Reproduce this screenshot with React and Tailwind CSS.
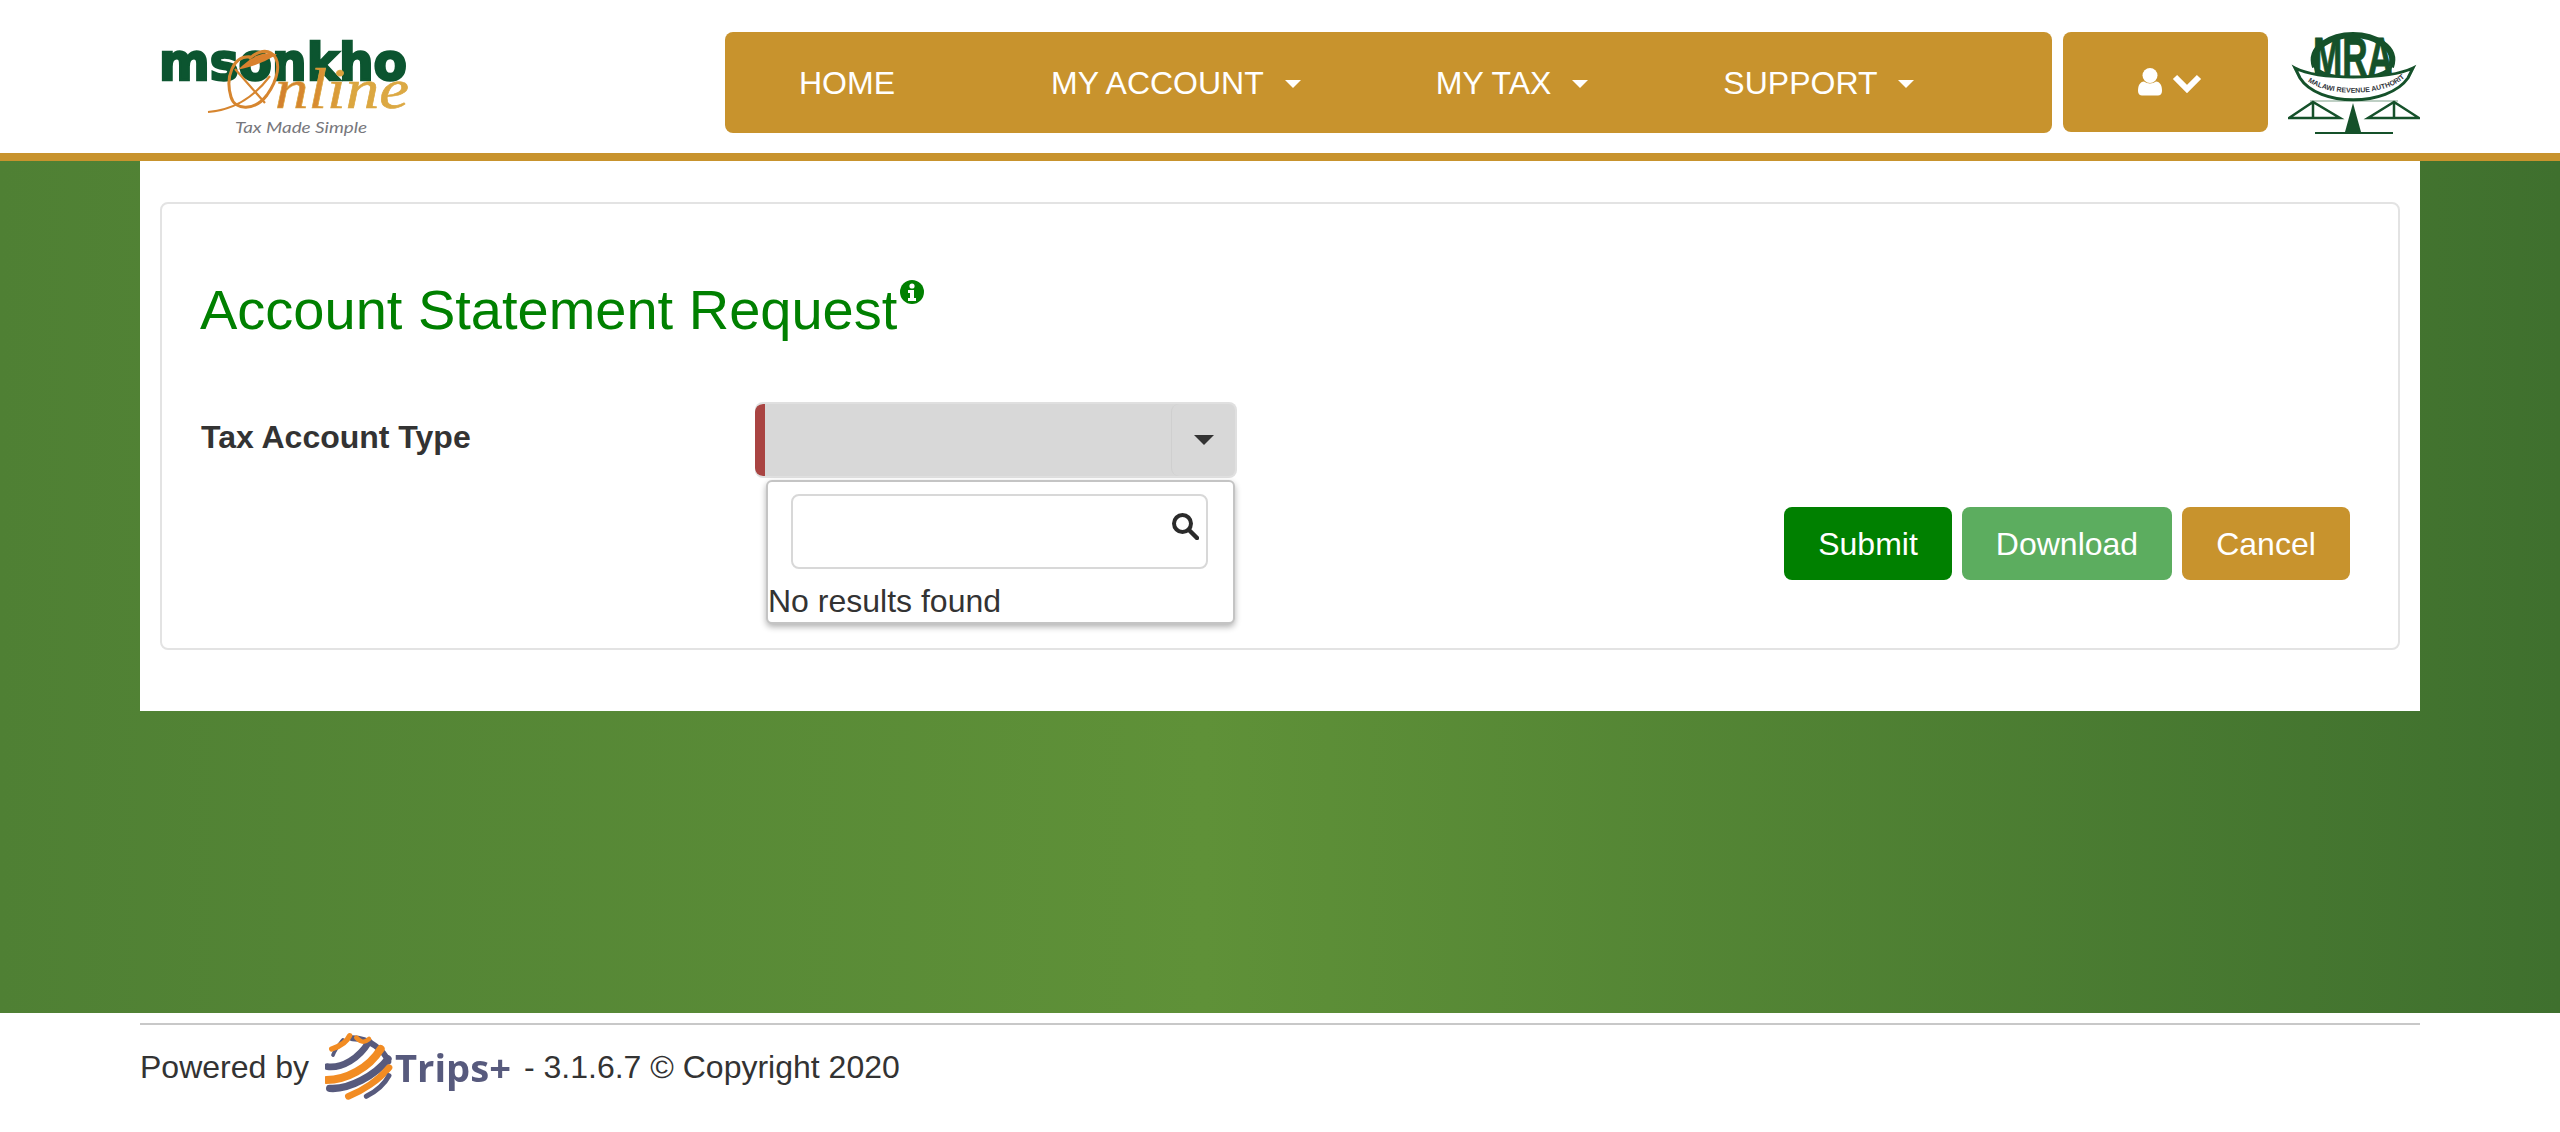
import React from "react";

function MsonkhoLogo() {
  return (
    <svg width="262" height="112" viewBox="0 -12 262 112" className="block">
      <defs>
        <linearGradient id="onlineGrad" x1="0" x2="1" y1="0" y2="0">
          <stop offset="0" stopColor="#d27f2e" />
          <stop offset="0.3" stopColor="#d88b30" />
          <stop offset="0.55" stopColor="#dba63f" />
          <stop offset="1" stopColor="#dcaa45" />
        </linearGradient>
      </defs>
      <text x="0" y="37" fontFamily="'DejaVu Sans', sans-serif" fontWeight="700" fontSize="52" fill="#0c5530" stroke="#0c5530" strokeWidth="2.500" textLength="248" lengthAdjust="spacingAndGlyphs">msonkho</text>
      <path d="M92 14C74 12 66 34 72 54c4 14 24 14 36-2 10-14 16-34 4-42-7-4-16 0-22 6" fill="none" stroke="#d6852f" strokeWidth="3" />
      <path d="M49 69c24-2 44-12 62-36M76 26l30 34" fill="none" stroke="#d6852f" strokeWidth="2.200" />
      <path d="M84 24c8-8 20-14 30-12-8 5-16 9-30 12z" fill="#d9812e" stroke="#d9812e" strokeWidth="3" />
      <text x="116" y="65" fontFamily="'Liberation Serif', serif" fontStyle="italic" fontSize="56" fill="url(#onlineGrad)" stroke="#dba63f" strokeWidth="0.600" textLength="134" lengthAdjust="spacingAndGlyphs">nline</text>
      <text x="76" y="90" fontFamily="Lato, sans-serif" fontStyle="italic" fontSize="16" fill="#77777c" textLength="132" lengthAdjust="spacingAndGlyphs">Tax Made Simple</text>
    </svg>
  );
}

function MraLogo() {
  return (
    <svg width="132" height="122" viewBox="0 -20 132 122" className="block">
      <path d="M27 34C20 14 44 2 65 2s45 12 38 32" fill="none" stroke="#15512a" strokeWidth="6" />
      <path d="M25 30c10 18 70 18 80 0l-3 14c-14 10-60 10-74 0z" fill="#15512a" />
      <text x="65" y="43" textAnchor="middle" fontFamily="'Liberation Sans', sans-serif" fontWeight="700" fontSize="56" fill="#15512a" stroke="#15512a" strokeWidth="1" textLength="80" lengthAdjust="spacingAndGlyphs">MRA</text>
      <path d="M7 35C30 47 100 47 125 35L120 45C100 74 30 74 12 45Z" fill="#fff" stroke="#15512a" strokeWidth="3" />
      <path id="mraArc" d="M15 44C34 65 96 65 117 44" fill="none" />
      <text fontFamily="'Liberation Sans', sans-serif" fontWeight="700" fontSize="7" fill="#30343a"><textPath href="#mraArc" startOffset="6%">MALAWI REVENUE AUTHORITY</textPath></text>
      <path d="M22 68H110" stroke="#15512a" strokeWidth="1" opacity=".55" />
      <path d="M1 85L25 69L52 85Z M80 85L106 69L131 85Z M25 69V85 M106 69V85" fill="none" stroke="#15512a" strokeWidth="2.500" />
      <path d="M65 70L73 99H57Z" fill="#15512a" />
      <path d="M27 100H105" stroke="#15512a" strokeWidth="2" />
    </svg>
  );
}

function TripsLogo() {
  return (
    <svg width="186" height="70" viewBox="0 0 186 70" className="block blur-[0.5px]">
      <g transform="translate(-6 -7) scale(0.3333)" fill="none" strokeLinecap="round">
        <path d="M100 40C150 40 195 75 208 110" stroke="#575a7d" strokeWidth="18" />
        <path d="M25 125C70 130 120 100 150 50" stroke="#575a7d" strokeWidth="20" />
        <path d="M42 90C50 70 60 60 72 45" stroke="#575a7d" strokeWidth="11" />
        <path d="M38 72C70 62 85 48 92 32" stroke="#f28c23" strokeWidth="16" />
        <path d="M112 38C125 52 135 55 150 42" stroke="#f28c23" strokeWidth="14" />
        <path d="M22 165C80 165 150 130 185 72" stroke="#f28c23" strokeWidth="24" />
        <path d="M32 190C90 195 170 150 207 102" stroke="#575a7d" strokeWidth="22" />
        <path d="M88 214C130 198 180 165 210 128" stroke="#f28c23" strokeWidth="20" />
        <path d="M142 214C170 200 195 180 210 152" stroke="#575a7d" strokeWidth="15" />
      </g>
      <text x="70" y="50" fontFamily="'Open Sans', sans-serif" fontWeight="700" fontSize="37" fill="#575a7d" textLength="116" lengthAdjust="spacingAndGlyphs">Trips+</text>
    </svg>
  );
}

function Caret({ className }) {
  return <span className={`inline-block w-0 h-0 border-x-[8px] border-x-transparent border-t-[8px] ${className}`} />;
}

function NavItem({ label, gap }) {
  return (
    <div className={`flex items-center ${gap}`}>
      <span>{label}</span>
      <Caret className="ml-[21px] mt-[3px] border-t-white" />
    </div>
  );
}

export default function App() {
  return (
    <div className="flex flex-col h-screen font-['Liberation_Sans',Arial,sans-serif] text-[32px] text-[#333333] bg-white overflow-hidden">
      <header className="shrink-0 h-[161px] border-b-[8px] border-[#c8932d] bg-white flex items-start pt-[32px] pl-[159px]">
        <div className="w-[566px] shrink-0 -mt-[1px]">
          <MsonkhoLogo />
        </div>
        <nav className="w-[1327px] h-[101px] shrink-0 rounded-[8px] bg-[#c8932d] text-white flex items-center pl-[74px]">
          <span className="mr-[156px]">HOME</span>
          <NavItem label="MY ACCOUNT" gap="mr-[135px]" />
          <NavItem label="MY TAX" gap="mr-[135px]" />
          <NavItem label="SUPPORT" gap="" />
        </nav>
        <button className="ml-[11px] w-[205px] h-[100px] shrink-0 rounded-[8px] bg-[#c8932d] flex items-center justify-center gap-[9px] pl-[9px]">
          <svg width="24" height="28" viewBox="0 0 24 28">
            <circle cx="12" cy="7.500" r="7.500" fill="#fff" />
            <path d="M0 23c0-6 2-9 6-9.500 3.500 2.500 8.500 2.500 12 0 4 .5 6 3.500 6 9.500 0 3-2 4.500-4 4.500H4c-2 0-4-1.500-4-4.500z" fill="#fff" />
          </svg>
          <svg width="32" height="22" viewBox="0 0 32 22">
            <path d="M4 6L16 18L28 6" fill="none" stroke="#fff" strokeWidth="6" strokeLinejoin="miter" />
          </svg>
        </button>
        <div className="ml-[20px] shrink-0 -mt-[19px]">
          <MraLogo />
        </div>
      </header>

      <main className="flex-1 px-[140px] bg-[linear-gradient(to_right,#4f8034_0%,#5f9138_47%,#3f702e_100%)]">
        <div className="h-[550px] bg-white px-[20px] pt-[41px]">
          <section className="relative h-[448px] border-2 border-[#e3e3e3] rounded-[8px] px-[38px]">
            <h1 className="pt-[74px] h-[198px] text-[56px] leading-[64px] text-[#008000] flex items-start">
              <span>Account Statement Request</span>
              <svg width="24" height="24" viewBox="0 0 24 24" className="ml-[3px] mt-[2px]">
                <circle cx="12" cy="12" r="12" fill="#008000" />
                <circle cx="12" cy="6" r="2.600" fill="#fff" />
                <path d="M8 10h6v8h2v3H8v-3h2v-5H8z" fill="#fff" />
              </svg>
            </h1>
            <div className="flex items-start">
              <label className="w-[555px] shrink-0 font-bold pl-[1px] pt-[15px] leading-[40px] text-[#333333]">Tax Account Type</label>
              <div className="relative w-[482px]">
                <div className="h-[76px] flex rounded-[8px] border-2 border-[#e0e0e0] border-l-0 bg-[#d8d8d8] overflow-hidden">
                  <div className="w-[10px] bg-[#a94442] rounded-l-[8px]" />
                  <div className="flex-1" />
                  <div className="w-[64px] rounded-[8px] border-l border-[#cfcfcf] flex items-center justify-center">
                    <Caret className="border-t-[#333333] border-x-[10px] border-t-[10px]" />
                  </div>
                </div>
                <div className="absolute left-[11px] top-[78px] w-[469px] h-[144px] bg-white border-2 border-[#c4c4c4] rounded-[6px] shadow-[0_3px_6px_rgba(0,0,0,0.3)] z-10">
                  <div className="mt-[12px] ml-[23px] w-[417px] h-[75px] border-2 border-[#d8d8d8] rounded-[8px] relative">
                    <svg width="28" height="28" viewBox="0 0 28 28" className="absolute right-[7px] top-[16px]">
                      <circle cx="11.500" cy="11.500" r="8.500" fill="none" stroke="#2b2b2b" strokeWidth="4" />
                      <path d="M18 18l8 8" stroke="#2b2b2b" strokeWidth="4.500" strokeLinecap="round" />
                    </svg>
                  </div>
                  <div className="mt-[12px] leading-[40px]">No results found</div>
                </div>
              </div>
            </div>
            <div className="absolute right-[48px] top-[303px] flex gap-[10px] text-white">
              <button className="w-[168px] h-[73px] rounded-[8px] bg-[#008000]">Submit</button>
              <button className="w-[210px] h-[73px] rounded-[8px] bg-[#5cad5f]">Download</button>
              <button className="w-[168px] h-[73px] rounded-[8px] bg-[#c8932d]">Cancel</button>
            </div>
          </section>
        </div>
      </main>

      <footer className="shrink-0 h-[119px] px-[140px] pt-[10px] bg-white">
        <div className="h-[2px] bg-[#c8c8c8]" />
        <div className="flex items-center h-[84px]">
          <span>Powered by</span>
          <span className="ml-[16px]"><TripsLogo /></span>
          <span className="ml-[13px]">- 3.1.6.7 © Copyright 2020</span>
        </div>
      </footer>
    </div>
  );
}
